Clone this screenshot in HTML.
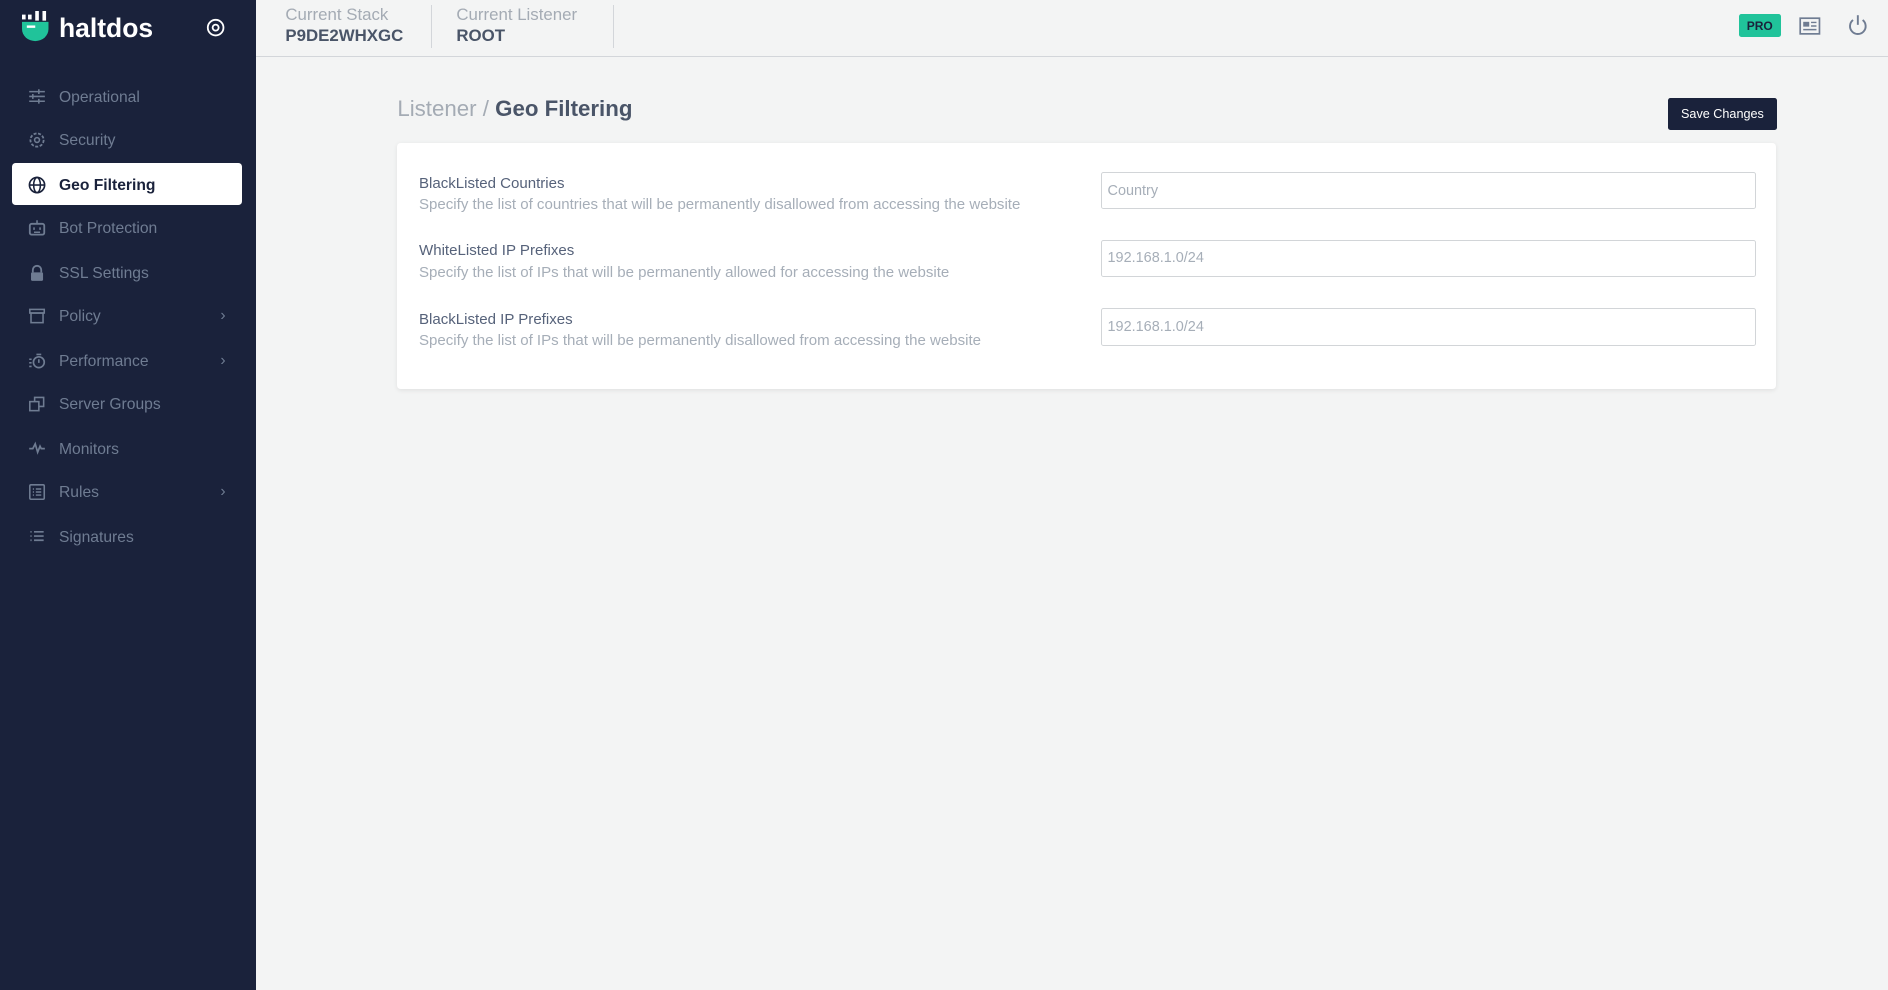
<!DOCTYPE html>
<html><head><meta charset="utf-8"><style>
html{zoom:1.20408}
*{box-sizing:border-box;margin:0;padding:0}
body{width:1568px;height:822px;background:#f3f4f4;font-family:"Liberation Sans",sans-serif;position:relative;overflow:hidden}
.sb{position:absolute;left:0;top:0;width:213px;height:822px;background:#1a223b}
.logo{position:absolute;left:18px;top:10px;color:#fff;font-weight:bold;font-size:22px}
.nav{position:absolute;left:0;width:213px;height:20px;color:#6f7c92;font-size:13px}
.nav span.t{position:absolute;left:49px;top:3px}
.nav svg{position:absolute;left:23px;top:2px}
.nav .ch{position:absolute;left:183px;top:2px;color:#6f7c92}
.act{position:absolute;left:10px;top:135px;width:191px;height:35px;background:#fff;border-radius:3px}
.top{position:absolute;left:213px;top:0;right:0;height:47px;border-bottom:1px solid #d3d6da}
.lbl{position:absolute;color:#a4abb4;font-size:14px}
.val{position:absolute;color:#4a5568;font-size:14px;font-weight:bold}
.dv{position:absolute;top:4px;width:1px;height:36px;background:#d3d6da}
.card{position:absolute;left:330px;top:119px;width:1145px;height:204px;background:#fff;border-radius:3px;box-shadow:0 1px 4px rgba(0,0,0,.08)}
.fl{position:absolute;left:18px;color:#56627a;font-size:12.5px}
.fd{position:absolute;left:18px;color:#a6aeb8;font-size:12.5px}
.in{position:absolute;left:584px;width:544px;height:31px;border:1px solid #d2d5d8;border-radius:2px;color:#a6aeb8;font-size:12px;padding:8px 5px}
</style></head><body>
<div class="sb">
<div class="logo"><svg width="24" height="26" viewBox="0 0 24 26" style="position:absolute;left:0;top:-1px"><path d="M0 9h22v6a11 10 0 0 1-22 0z" fill="#20c39a"/><rect x="0" y="3" width="3" height="4" fill="#fff"/><rect x="5" y="3" width="3" height="4" fill="#fff"/><rect x="11" y="0" width="3" height="8" fill="#fff"/><rect x="17" y="0" width="3" height="8" fill="#fff"/><path d="M4 13h7" stroke="#fff" stroke-width="2"/></svg><span style="position:absolute;left:31px;top:1px">haltdos</span></div>
<svg width="16" height="16" style="position:absolute;left:171px;top:15px"><circle cx="8" cy="8" r="6.5" fill="none" stroke="#fff" stroke-width="1.5"/><circle cx="8" cy="8" r="2.5" fill="none" stroke="#fff" stroke-width="1.5"/></svg>
<div class="act"></div>
<div class="nav" style="top:71px"><svg width="15" height="14"><path d="M1 3h13M1 7h13M1 11h13M9 1v4M4 5v4M9 9v4" stroke="#6f7c92" stroke-width="1.3"/></svg><span class="t">Operational</span></div>
<div class="nav" style="top:107px"><svg width="15" height="15"><circle cx="7.5" cy="7.5" r="5.5" fill="none" stroke="#6f7c92" stroke-width="1.5" stroke-dasharray="2.5 1.3"/><circle cx="7.5" cy="7.5" r="2" fill="none" stroke="#6f7c92" stroke-width="1.3"/></svg><span class="t">Security</span></div>
<div class="nav" style="top:144px;color:#1a223b;font-weight:bold"><svg width="15" height="15"><circle cx="7.5" cy="7.5" r="6.3" fill="none" stroke="#1a223b" stroke-width="1.4"/><ellipse cx="7.5" cy="7.5" rx="2.8" ry="6.3" fill="none" stroke="#1a223b" stroke-width="1.3"/><path d="M1 7.5h13" stroke="#1a223b" stroke-width="1.3"/></svg><span class="t">Geo Filtering</span></div>
<div class="nav" style="top:180px"><svg width="15" height="15"><rect x="1.5" y="4" width="12" height="9" rx="1.5" fill="none" stroke="#6f7c92" stroke-width="1.5"/><path d="M7.5 1v3M5 7v2M10 7v2M5 11h5" stroke="#6f7c92" stroke-width="1.3"/></svg><span class="t">Bot Protection</span></div>
<div class="nav" style="top:217px"><svg width="15" height="15"><path d="M4 7V5a3.5 3.5 0 0 1 7 0v2" fill="none" stroke="#6f7c92" stroke-width="1.5"/><rect x="2.5" y="7" width="10" height="7" rx="1" fill="#6f7c92"/></svg><span class="t">SSL Settings</span></div>
<div class="nav" style="top:253px"><svg width="15" height="15"><rect x="1.5" y="2" width="12" height="3" fill="none" stroke="#6f7c92" stroke-width="1.3"/><rect x="2.5" y="5" width="10" height="8" fill="none" stroke="#6f7c92" stroke-width="1.3"/></svg><span class="t">Policy</span><span class="ch">›</span></div>
<div class="nav" style="top:290px"><svg width="15" height="15"><circle cx="9" cy="8.5" r="4.5" fill="none" stroke="#6f7c92" stroke-width="1.4"/><path d="M9 6v3M7 2h4M1 6h2M1 9h2M1 12h2" stroke="#6f7c92" stroke-width="1.3"/></svg><span class="t">Performance</span><span class="ch">›</span></div>
<div class="nav" style="top:326px"><svg width="15" height="15"><rect x="1.5" y="5.5" width="7.5" height="7.5" fill="none" stroke="#6f7c92" stroke-width="1.3"/><path d="M5.5 5.5V2h7.5v7.5H9" fill="none" stroke="#6f7c92" stroke-width="1.3"/></svg><span class="t">Server Groups</span></div>
<div class="nav" style="top:363px"><svg width="15" height="15"><path d="M1 8h3l2-4 2 7 2-5 1 2h3" fill="none" stroke="#6f7c92" stroke-width="1.4"/></svg><span class="t">Monitors</span></div>
<div class="nav" style="top:399px"><svg width="15" height="15"><rect x="1.5" y="1.5" width="12" height="12" rx="1" fill="none" stroke="#6f7c92" stroke-width="1.3"/><path d="M4 5h1M4 7.5h1M4 10h1M6.5 5h4.5M6.5 7.5h4.5M6.5 10h4.5" stroke="#6f7c92" stroke-width="1.2"/></svg><span class="t">Rules</span><span class="ch">›</span></div>
<div class="nav" style="top:436px"><svg width="15" height="15"><path d="M2 4h1M2 7.5h1M2 11h1M5 4h8M5 7.5h8M5 11h8" stroke="#6f7c92" stroke-width="1.4"/></svg><span class="t">Signatures</span></div>
</div>
<div class="top">
<div class="lbl" style="left:24px;top:4px">Current Stack</div>
<div class="val" style="left:24px;top:22px">P9DE2WHXGC</div>
<div class="dv" style="left:145px"></div>
<div class="lbl" style="left:166px;top:4px">Current Listener</div>
<div class="val" style="left:166px;top:22px">ROOT</div>
<div class="dv" style="left:296px"></div>
<div style="position:absolute;left:1231px;top:12px;width:35px;height:19px;background:#20c39a;border-radius:2px;color:#1a223b;font-size:10px;font-weight:bold;text-align:center;line-height:20px">PRO</div>
<svg width="18" height="16" style="position:absolute;left:1281px;top:14px"><rect x="1" y="1" width="16" height="13" fill="none" stroke="#6f7c92" stroke-width="1.4"/><rect x="3.5" y="4" width="5" height="4" fill="#6f7c92"/><path d="M10 4.5h4.5M10 7.5h4.5M3.5 10.5h11" stroke="#6f7c92" stroke-width="1.2"/></svg>
<svg width="18" height="18" style="position:absolute;left:1321px;top:12px"><path d="M5 5a6.5 6.5 0 1 0 8 0" fill="none" stroke="#6f7c92" stroke-width="1.6"/><path d="M9 1v8" stroke="#6f7c92" stroke-width="1.6"/></svg>
</div>
<div style="position:absolute;left:330px;top:80px;font-size:18.5px;color:#a4abb4">Listener / <b style="color:#4a5568">Geo Filtering</b></div>
<div style="position:absolute;left:1385px;top:81px;width:91px;height:27px;background:#1a223b;border-radius:2px;color:#fff;font-size:10.5px;text-align:center;line-height:28px">Save Changes</div>
<div class="card">
<div class="fl" style="top:26px">BlackListed Countries</div>
<div class="fd" style="top:44px">Specify the list of countries that will be permanently disallowed from accessing the website</div>
<div class="in" style="top:24px">Country</div>
<div class="fl" style="top:82px">WhiteListed IP Prefixes</div>
<div class="fd" style="top:100px">Specify the list of IPs that will be permanently allowed for accessing the website</div>
<div class="in" style="top:80px">192.168.1.0/24</div>
<div class="fl" style="top:139px">BlackListed IP Prefixes</div>
<div class="fd" style="top:157px">Specify the list of IPs that will be permanently disallowed from accessing the website</div>
<div class="in" style="top:137px">192.168.1.0/24</div>
</div>
</body></html>
